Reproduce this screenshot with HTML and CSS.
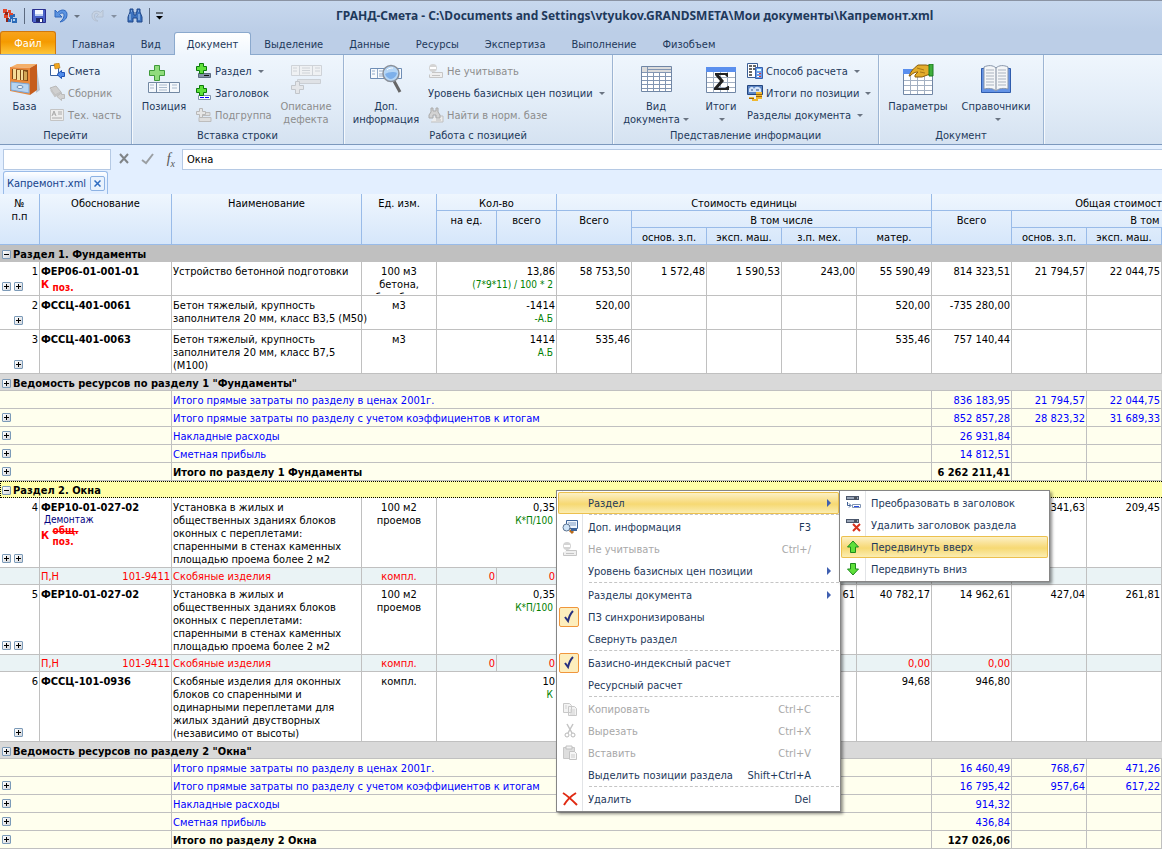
FILE: index.html
```html
<!DOCTYPE html>
<html lang="ru">

<head>
    <meta charset="UTF-8">
    <meta name="viewport" content="width=device-width, initial-scale=1.0">
    <title>ГРАНД-Смета</title>
    <link rel="stylesheet" href="styles.css">
</head>

<body>
    <!-- иконки, которые нужны несколько раз -->
    <svg class="defs" aria-hidden="true">
        <symbol id="plus" viewBox="0 0 16 16">
            <path d="M5.500 1.500h4v3h3v4h-3v3h-4v-3h-3v-4h3z" fill="#5fe03a" stroke="#0b7a0b" />
        </symbol>
        <symbol id="exclude" viewBox="0 0 16 16">
            <path d="M4 9.500h10.500v5H1.500v-3" fill="#efefef" stroke="#c6c6c6" />
            <path d="M4 12.500h8" stroke="#c4c4c4" />
            <circle cx="5" cy="5" r="4" fill="#d4d4d4" />
            <path d="M2 5h6" stroke="#fff" stroke-width="2" />
        </symbol>
        <symbol id="bar" viewBox="0 0 16 16">
            <rect x="1.500" y="2.500" width="12" height="3" fill="#9aa6b8" stroke="#4a566b" />
            <path d="M9 4h3" stroke="#000" />
        </symbol>
    </svg>

    <header class="title">
        <div class="quick">
            <svg width="16" height="16" viewBox="0 0 16 16">
                <path d="M1 1h4v4H1zM6 2h3v3H6zM2 6h4v4H2zM7 5h4v4H7z" fill="#e2472b" />
                <path d="M3 4h3v3H3zM4 10h3v4H4z" fill="#8f2418" />
                <path d="M8 7h3v4H8zM10 10h5v5h-5zM6 11h3v3H6zM11 6h2v3h-2z" fill="#2b6ab8" />
                <path d="M11 11h2v2h-2z" fill="#a9d0f5" />
            </svg>
            <i class="line"></i>
            <button aria-label="Сохранить"><svg width="16" height="16" viewBox="0 0 16 16">
                    <path d="M1.500 1.500h13v13h-12l-1-1z" fill="#4a62c8" stroke="#2a2f8f" />
                    <path d="M4 2h8v6H4z" fill="#f5f8ff" />
                    <path d="M4 6h8v2H4z" fill="#bcd0f2" />
                    <path d="M5 10h7v4H5z" fill="#222a66" />
                    <path d="M9 11h2v3H9z" fill="#fff" />
                </svg></button>
            <button class="undo" aria-label="Отменить"><svg width="16" height="16" viewBox="0 0 16 16">
                    <path d="M2 2v7h7L6.500 6.500C9 4 11 5 11 7.500c0 2-1 4-4 6.500 5-1 7-4 7-7.500 0-5-5.500-6-9.500-2z" fill="#5b93e0" stroke="#2e66bd" />
                </svg><b class="arr"></b></button>
            <button class="undo" aria-label="Вернуть" disabled><svg width="16" height="16" viewBox="0 0 16 16">
                    <path d="M13 2v7H6l2.500-2.500C6 4.500 4.500 5.500 4.500 8s1 4 3.500 5c-4 0-6-2-6-5.500C2 3 7 2 10.500 4.500z" fill="#c9d3e0" stroke="#adb9c9" />
                </svg><b class="arr"></b></button>
            <button aria-label="Найти"><svg width="16" height="16" viewBox="0 0 16 16">
                    <path d="M3 1h3v3h1v3h2V4h1V1h3v3l2 5v5h-5v-4H6v4H1V9l2-5z" fill="#3d73bf" stroke="#20488a" />
                    <path d="M3 6v6M12 6v6M4 3h1M11 3h1" stroke="#b4d3f5" />
                </svg></button>
            <i class="line"></i>
            <button class="more" aria-label="Настройка панели"><svg width="8" height="8" viewBox="0 0 8 8">
                    <path d="M0 1h7" stroke="#000" />
                    <path d="M0 4h7L3.500 7.500z" />
                </svg></button>
        </div>
        <h1>ГРАНД-Смета - C:\Documents and Settings\vtyukov.GRANDSMETA\Мои документы\Капремонт.xml</h1>
    </header>

    <nav class="tabs">
        <button class="file">Файл</button>
        <button>Главная</button>
        <button>Вид</button>
        <button class="on">Документ</button>
        <button>Выделение</button>
        <button>Данные</button>
        <button>Ресурсы</button>
        <button>Экспертиза</button>
        <button>Выполнение</button>
        <button>Физобъем</button>
    </nav>

    <div class="ribbon">
        <section class="g1">
            <div class="tools">
                <button class="big"><svg width="32" height="32" viewBox="0 0 32 32">
                        <path d="M28 5l3 21-4 3z" fill="#b9c2cc" />
                        <path d="M2 3l6-3h20l-7 4z" fill="#f4b06a" />
                        <path d="M21 4l7-4v26l-7 5z" fill="#c65d1c" />
                        <path d="M1 3l20 1v27L1 27z" fill="#ea8a3c" />
                        <path d="M3 5l16 1v11L3 15z" fill="#7d4a15" />
                        <path d="M4 5h3v10H4zM8 6h3v10H8zM12 6h2v10h-2z" fill="#f4dc98" />
                        <path d="M15 7l3 1v8h-3z" fill="#d2a856" />
                        <path d="M2 18l18 2v9L2 26z" fill="#b6d4f2" stroke="#7ba6d6" />
                        <ellipse cx="11" cy="23" rx="3" ry="1.500" fill="#fff" stroke="#6b8db5" />
                    </svg><span>База</span></button>
                <div class="col">
                    <button><svg width="16" height="16" viewBox="0 0 16 16">
                            <path d="M1.500 2.500h8v10h-8z" fill="#fff" stroke="#39619e" />
                            <path d="M5 1l5-1 1 5-5 1z" fill="#f0a61e" stroke="#a8680d" stroke-width=".5" />
                            <path d="M15.500 9.500h-3v-2l-4.500 4 4.500 4v-2h3z" fill="#4f8ceb" stroke="#1f52b5" />
                        </svg>Смета</button>
                    <button disabled><svg width="16" height="16" viewBox="0 0 16 16">
                            <path d="M1 3l6-2 5 6-6 3z" fill="#cfcfcf" stroke="#b9b9b9" />
                            <path d="M2 5l4 6 6-3" fill="none" stroke="#c4c4c4" stroke-width="2" />
                            <path d="M15.500 9.500h-3v-2l-4.500 4 4.500 4v-2h3z" fill="#d2d2d2" stroke="#bbb" />
                        </svg>Сборник</button>
                    <button disabled><svg width="16" height="16" viewBox="0 0 16 16">
                            <path d="M1.500 2.500h13v11h-13z" fill="#ededed" stroke="#c4c4c4" />
                            <path d="M3 9l2-5 2 5M4 7h2M9 5h4M9 7h4M3 11h10" fill="none" stroke="#aaa" />
                        </svg>Тех. часть</button>
                </div>
            </div>
            <h2>Перейти</h2>
        </section>

        <section class="g2">
            <div class="tools">
                <button class="big"><svg width="32" height="32" viewBox="0 0 32 32">
                        <path d="M6.500 1.500h5v5h5v5h-5v5h-5v-5h-5v-5h5z" fill="#90dc7c" stroke="#3f9a3a" />
                        <path d="M.500 18.500h31v10H.500z" fill="#f4f8fc" stroke="#7288a3" />
                        <path d="M8.500 18v10M21.500 18v10" stroke="#7288a3" />
                        <path d="M2 21h4M2 24h4M11 21h8M11 23.500h8M11 26h8M24 21h5M24 24h5" stroke="#a9b9cc" />
                    </svg><span>Позиция</span></button>
                <div class="col">
                    <button><svg width="16" height="16" viewBox="0 0 16 16">
                            <path d="M2.500 10.500h12v4h-12z" fill="#8593a8" stroke="#5d6b80" />
                            <path d="M8 12.500h5" stroke="#111" />
                            <use href="#plus" x="-2" y="-1" width="16" height="16" />
                        </svg>Раздел<b class="arr"></b></button>
                    <button><svg width="16" height="16" viewBox="0 0 16 16">
                            <path d="M2.500 10.500h12v4h-12z" fill="#fff" stroke="#8092ab" />
                            <path d="M4 12.500h9" stroke="#00f" stroke-dasharray="4 1" />
                            <use href="#plus" x="-2" y="-1" width="16" height="16" />
                        </svg>Заголовок</button>
                    <button disabled><svg width="16" height="16" viewBox="0 0 16 16">
                            <path d="M4 5.500h10v3H4zM3 10.500h12v4H3z" fill="#dedede" stroke="#bdbdbd" />
                            <path d="M3.500 1.500h3v3h3v3h-3v3h-3v-3h-3v-3h3z" fill="#e6e6e6" stroke="#b8b8b8" />
                        </svg>Подгруппа</button>
                </div>
                <button class="big" disabled><svg width="32" height="32" viewBox="0 0 32 32">
                        <path d="M1.500 1.500h30v10h-30z" fill="#eff1f3" stroke="#cfd3d8" />
                        <path d="M9.500 2v9M22.500 2v9M3 4h4M3 7h4M12 4h8M12 6.500h8M12 9h8M25 4h5M25 7h5" stroke="#cfd3d8" />
                        <path d="M7.500 15.500h23v4h-23z" fill="#dfe2e6" stroke="#cbcfd4" />
                        <path d="M5.500 17.500h4v4h4v4h-4v4h-4v-4h-4v-4h4z" fill="#e4e6e9" stroke="#c2c6cb" />
                    </svg><span>Описание<br>дефекта</span></button>
            </div>
            <h2>Вставка строки</h2>
        </section>

        <section class="g3">
            <div class="tools">
                <button class="big"><svg width="32" height="32" viewBox="0 0 32 32">
                        <path d="M.500 4.500h31v10H.500z" fill="#f7fafd" stroke="#6e8db5" />
                        <path d="M7.500 5v9M2 7h3M2 10h3M9 7h5M9 10h4M9 12h4" stroke="#92abca" />
                        <path d="M24 17l6 11" stroke="#666" stroke-width="3" />
                        <circle cx="21" cy="9.500" r="8" fill="#b5d6f6" stroke="#8a9099" stroke-width="1.500" />
                        <path d="M15 10c3-2 9-3 12-1-1 4-4 6-7 6-2-1-4-2-5-5z" fill="#7db0ea" />
                        <path d="M17 6c2-2 4-2 6-2" stroke="#fff" fill="none" />
                    </svg><span>Доп.<br>информация</span></button>
                <div class="col">
                    <button disabled><svg width="16" height="16">
                            <use href="#exclude" />
                        </svg>Не учитывать</button>
                    <button>Уровень базисных цен позиции<b class="arr"></b></button>
                    <button disabled><svg width="16" height="16" viewBox="0 0 16 16">
                            <path d="M7 9h8v6H3" fill="#ececec" stroke="#c0c0c0" />
                            <path d="M3 1h2v3h3V1h2v4l2 3v3H8V8H5v3H1V8l2-3z" fill="#d2d2d2" stroke="#aaa" />
                            <path d="M8 13h5" stroke="#bbb" />
                        </svg>Найти в норм. базе</button>
                </div>
            </div>
            <h2>Работа с позицией</h2>
        </section>

        <section class="g4">
            <div class="tools">
                <button class="big"><svg width="32" height="32" viewBox="0 0 32 32">
                        <path d="M1.500 2.500h30v25h-30z" fill="#fff" stroke="#7086a5" />
                        <path d="M2 3h29v5H2z" fill="#dcdcdc" />
                        <path d="M2 8.500h29M2 12.500h29M2 16.500h29M2 20.500h29M2 24.500h29M7.500 3v24M13.500 8v19M19.500 8v19M25.500 8v19M8 5.500h23" stroke="#8296b3" />
                    </svg><span>Вид<br>документа<b class="arr"></b></span></button>
                <button class="big"><svg width="32" height="32" viewBox="0 0 32 32">
                        <path d="M1.500 3.500h29v25h-29z" fill="#fff" stroke="#7086a5" />
                        <path d="M1 3h30v5H1z" fill="#5a8fee" />
                        <path d="M2 13.500h28M2 18.500h28M2 23.500h28M8.500 8v20M15.500 8v20M22.500 8v20" stroke="#a3b0c2" />
                        <path d="M10 9h13v4h-1l-2-2h-6l5 6-6 7h7l3-2h1v4H9v-2l6-7-5-6z" fill="#222" />
                    </svg><span>Итоги<br><b class="arr"></b></span></button>
                <div class="col">
                    <button><svg width="16" height="16" viewBox="0 0 16 16">
                            <path d="M.500.500h10v14H.500z" fill="#fff" stroke="#3b5f96" />
                            <path d="M2 3h3M2 6h3M2 9h3M2 12h3M6 3h3M6 6h2" stroke="#333" stroke-width="1.500" />
                            <path d="M8.500 4.500h7v11h-7z" fill="#6d9ce6" stroke="#3461ae" />
                            <path d="M10 6h4v2h-4z" fill="#dff" />
                            <path d="M10 10h2v1h-2zM10 13h2v1h-2z" fill="#fff" />
                            <path d="M12 10h2v1h-2zM12 13h2v1h-2z" fill="#d33" />
                        </svg>Способ расчета<b class="arr"></b></button>
                    <button><svg width="16" height="16" viewBox="0 0 16 16">
                            <path d="M.500.500h15v9H.500z" fill="#5b84c4" stroke="#23457f" />
                            <path d="M2 4c2-3 4-3 5 0 1-3 5-3 7 0v3H2z" fill="#d5e4f8" />
                            <path d="M4 5h2M9 5h3" stroke="#284a86" />
                            <path d="M9 7h6v7H9zM2 12h5v2H2zM5 14h6v2H5z" fill="#f0b830" />
                            <path d="M9 9.500h6M9 11.500h6M2 13.500h5" stroke="#9a640c" />
                        </svg>Итоги по позиции<b class="arr"></b></button>
                    <button>Разделы документа<b class="arr"></b></button>
                </div>
            </div>
            <h2>Представление информации</h2>
        </section>

        <section class="g5">
            <div class="tools">
                <button class="big"><svg width="32" height="32" viewBox="0 0 32 32">
                        <path d="M1.500 5.500h29v25h-29z" fill="#fff" stroke="#7086a5" />
                        <path d="M1 5h9v5H1z" fill="#5a8fee" />
                        <path d="M2 16.500h28M2 21.500h28M2 26.500h28M8.500 10v20M15.500 10v20M22.500 10v20" stroke="#a3b0c2" />
                        <path d="M7 12c2-5 5-8 9-11h8l4 1v8l-8 3h-7v-2l3-3c-3 0-5 1-8 4z" fill="#e3ad2c" stroke="#8b5e0c" />
                        <path d="M15 4l7 2M18 8l5 1" stroke="#a87817" />
                        <path d="M27 0h4v12h-4z" fill="#3fae3b" stroke="#1c7a25" />
                    </svg><span>Параметры</span></button>
                <button class="big"><svg width="32" height="32" viewBox="0 0 32 32">
                        <path d="M1.500 4.500h29v24h-29z" fill="#6493e6" stroke="#2f5cad" />
                        <path d="M4 3c4-2 9-2 12 1 3-3 8-3 12-1v22c-4-1-9-1-12 2-3-3-8-3-12-2z" fill="#f4f6f8" stroke="#8795aa" />
                        <path d="M16 4v22" stroke="#7a879b" />
                        <path d="M6 6h8M6 9h8M6 12h8M6 15h8M6 18h8M6 21h8M18 6h8M18 9h8M18 12h8M18 15h8M18 18h8M18 21h8" stroke="#aab3bf" />
                    </svg><span>Справочники<br><b class="arr"></b></span></button>
            </div>
            <h2>Документ</h2>
        </section>
    </div>

    <div class="formula">
        <input class="cell" type="text" aria-label="Имя ячейки">
        <div class="fbtns">
            <button aria-label="Отмена"><svg width="12" height="12" viewBox="0 0 12 12">
                    <path d="M2 1l8 9M10 1l-8 9" stroke="#808487" stroke-width="2" />
                </svg></button>
            <button aria-label="Ввод"><svg width="14" height="12" viewBox="0 0 14 12">
                    <path d="M1 7l4 3 7-9" fill="none" stroke="#9b9fa3" stroke-width="2" />
                </svg></button>
            <button class="fx" aria-label="Функция"><i>f</i><sub>x</sub></button>
        </div>
        <input class="text" type="text" value="Окна" aria-label="Формула">
    </div>

    <div class="docs">
        <div class="doc"><a href="#sheet">Капремонт.xml</a><button aria-label="Закрыть"><svg width="7" height="7" viewBox="0 0 7 7">
                    <path d="M.500.500l6 6M6.500.500l-6 6" stroke="#2f6cc0" stroke-width="1.500" />
                </svg></button></div>
    </div>

    <main class="sheet" id="sheet">
        <table>
            <colgroup>
                <col class="c40"><col class="c132"><col class="c190"><col class="c75"><col class="c60"><col class="c60">
                <col class="c75"><col class="c75"><col class="c75"><col class="c75"><col class="c75">
                <col class="c80"><col class="c75"><col class="c75"><col class="c75"><col class="c75">
            </colgroup>
            <thead>
                <tr>
                    <th rowspan="3">№<br>п.п</th>
                    <th rowspan="3">Обоснование</th>
                    <th rowspan="3">Наименование</th>
                    <th rowspan="3">Ед. изм.</th>
                    <th colspan="2">Кол-во</th>
                    <th colspan="5">Стоимость единицы</th>
                    <th colspan="5">Общая стоимость</th>
                </tr>
                <tr>
                    <th rowspan="2">на ед.</th>
                    <th rowspan="2">всего</th>
                    <th rowspan="2">Всего</th>
                    <th colspan="4">В том числе</th>
                    <th rowspan="2">Всего</th>
                    <th colspan="4">В том числе</th>
                </tr>
                <tr>
                    <th>основ. з.п.</th>
                    <th>эксп. маш.</th>
                    <th>з.п. мех.</th>
                    <th>матер.</th>
                    <th>основ. з.п.</th>
                    <th>эксп. маш.</th>
                    <th>з.п. мех.</th>
                    <th>матер.</th>
                </tr>
            </thead>
            <tbody>
                <tr class="sec">
                    <td colspan="16"><button class="exp minus" aria-label="Свернуть"></button>Раздел 1. Фундаменты</td>
                </tr>
                <tr class="item">
                    <td class="no"><div><span>1</span><p><button class="exp" aria-label="Развернуть"></button><button class="exp" aria-label="Развернуть"></button></p></div></td>
                    <td class="code">ФЕР06-01-001-01<div class="k">К <em>поз.</em></div></td>
                    <td class="name">Устройство бетонной подготовки</td>
                    <td class="unit"><div class="clip">100 м3 бетона, бутобетона</div></td>
                    <td colspan="2">13,86<small>(7*9*11) / 100 * 2</small></td>
                    <td>58 753,50</td>
                    <td>1 572,48</td>
                    <td>1 590,53</td>
                    <td>243,00</td>
                    <td>55 590,49</td>
                    <td>814 323,51</td>
                    <td>21 794,57</td>
                    <td>22 044,75</td>
                    <td></td>
                    <td></td>
                </tr>
                <tr class="item">
                    <td class="no"><div><span>2</span><p><button class="exp" aria-label="Развернуть"></button></p></div></td>
                    <td class="code">ФССЦ-401-0061</td>
                    <td class="name">Бетон тяжелый, крупность<br>заполнителя 20 мм, класс В3,5 (М50)</td>
                    <td class="unit">м3</td>
                    <td colspan="2">-1414<small>-А.Б</small></td>
                    <td>520,00</td>
                    <td></td>
                    <td></td>
                    <td></td>
                    <td>520,00</td>
                    <td>-735 280,00</td>
                    <td></td>
                    <td></td>
                    <td></td>
                    <td></td>
                </tr>
                <tr class="item">
                    <td class="no"><div><span>3</span><p><button class="exp" aria-label="Развернуть"></button></p></div></td>
                    <td class="code">ФССЦ-401-0063</td>
                    <td class="name">Бетон тяжелый, крупность<br>заполнителя 20 мм, класс В7,5<br>(М100)</td>
                    <td class="unit">м3</td>
                    <td colspan="2">1414<small>А.Б</small></td>
                    <td>535,46</td>
                    <td></td>
                    <td></td>
                    <td></td>
                    <td>535,46</td>
                    <td>757 140,44</td>
                    <td></td>
                    <td></td>
                    <td></td>
                    <td></td>
                </tr>
                <tr class="res">
                    <td colspan="16"><button class="exp" aria-label="Развернуть"></button>Ведомость ресурсов по разделу 1 "Фундаменты"</td>
                </tr>
                <tr class="sum">
                    <td colspan="2"></td>
                    <td colspan="9">Итого прямые затраты по разделу в ценах 2001г.</td>
                    <td>836 183,95</td>
                    <td>21 794,57</td>
                    <td>22 044,75</td>
                    <td></td>
                    <td></td>
                </tr>
                <tr class="sum">
                    <td colspan="2"><button class="exp" aria-label="Развернуть"></button></td>
                    <td colspan="9">Итого прямые затраты по разделу с учетом коэффициентов к итогам</td>
                    <td>852 857,28</td>
                    <td>28 823,32</td>
                    <td>31 689,33</td>
                    <td></td>
                    <td></td>
                </tr>
                <tr class="sum">
                    <td colspan="2"><button class="exp" aria-label="Развернуть"></button></td>
                    <td colspan="9">Накладные расходы</td>
                    <td>26 931,84</td>
                    <td></td>
                    <td></td>
                    <td></td>
                    <td></td>
                </tr>
                <tr class="sum">
                    <td colspan="2"><button class="exp" aria-label="Развернуть"></button></td>
                    <td colspan="9">Сметная прибыль</td>
                    <td>14 812,51</td>
                    <td></td>
                    <td></td>
                    <td></td>
                    <td></td>
                </tr>
                <tr class="sum all">
                    <td colspan="2"><button class="exp" aria-label="Развернуть"></button></td>
                    <td colspan="9">Итого по разделу 1 Фундаменты</td>
                    <td>6 262 211,41</td>
                    <td></td>
                    <td></td>
                    <td></td>
                    <td></td>
                </tr>
                <tr class="sec cur">
                    <td colspan="16"><div><button class="exp minus" aria-label="Свернуть"></button>Раздел 2. Окна</div></td>
                </tr>
                <tr class="item">
                    <td class="no"><div><span>4</span><p><button class="exp" aria-label="Развернуть"></button><button class="exp" aria-label="Развернуть"></button></p></div></td>
                    <td class="code">ФЕР10-01-027-02<div class="dem">Демонтаж</div><div class="k two">К <em><s>общ.</s><br>поз.</em></div></td>
                    <td class="name">Установка в жилых и<br>общественных зданиях блоков<br>оконных с переплетами:<br>спаренными в стенах каменных<br>площадью проема более 2 м2</td>
                    <td class="unit">100 м2<br>проемов</td>
                    <td colspan="2">0,35<small>К*П/100</small></td>
                    <td></td>
                    <td></td>
                    <td></td>
                    <td></td>
                    <td></td>
                    <td></td>
                    <td>341,63</td>
                    <td>209,45</td>
                    <td></td>
                    <td></td>
                </tr>
                <tr class="red">
                    <td></td>
                    <td><div class="pn"><span>П,Н</span><span>101-9411</span></div></td>
                    <td class="name">Скобяные изделия</td>
                    <td class="unit">компл.</td>
                    <td>0</td>
                    <td>0</td>
                    <td></td>
                    <td></td>
                    <td></td>
                    <td></td>
                    <td>0,00</td>
                    <td>0,00</td>
                    <td></td>
                    <td></td>
                    <td></td>
                    <td></td>
                </tr>
                <tr class="item">
                    <td class="no"><div><span>5</span><p><button class="exp" aria-label="Развернуть"></button><button class="exp" aria-label="Развернуть"></button></p></div></td>
                    <td class="code">ФЕР10-01-027-02</td>
                    <td class="name">Установка в жилых и<br>общественных зданиях блоков<br>оконных с переплетами:<br>спаренными в стенах каменных<br>площадью проема более 2 м2</td>
                    <td class="unit">100 м2<br>проемов</td>
                    <td colspan="2">0,35<small>К*П/100</small></td>
                    <td></td>
                    <td></td>
                    <td></td>
                    <td>61</td>
                    <td>40 782,17</td>
                    <td>14 962,61</td>
                    <td>427,04</td>
                    <td>261,81</td>
                    <td></td>
                    <td></td>
                </tr>
                <tr class="red">
                    <td></td>
                    <td><div class="pn"><span>П,Н</span><span>101-9411</span></div></td>
                    <td class="name">Скобяные изделия</td>
                    <td class="unit">компл.</td>
                    <td>0</td>
                    <td>0</td>
                    <td></td>
                    <td></td>
                    <td></td>
                    <td></td>
                    <td>0,00</td>
                    <td>0,00</td>
                    <td></td>
                    <td></td>
                    <td></td>
                    <td></td>
                </tr>
                <tr class="item">
                    <td class="no"><div><span>6</span><p><button class="exp" aria-label="Развернуть"></button></p></div></td>
                    <td class="code">ФССЦ-101-0936</td>
                    <td class="name">Скобяные изделия для оконных<br>блоков со спаренными и<br>одинарными переплетами для<br>жилых зданий двустворных<br>(независимо от высоты)</td>
                    <td class="unit">компл.</td>
                    <td colspan="2">10<small>К</small></td>
                    <td></td>
                    <td></td>
                    <td></td>
                    <td></td>
                    <td>94,68</td>
                    <td>946,80</td>
                    <td></td>
                    <td></td>
                    <td></td>
                    <td></td>
                </tr>
                <tr class="res">
                    <td colspan="16"><button class="exp" aria-label="Развернуть"></button>Ведомость ресурсов по разделу 2 "Окна"</td>
                </tr>
                <tr class="sum">
                    <td colspan="2"></td>
                    <td colspan="9">Итого прямые затраты по разделу в ценах 2001г.</td>
                    <td>16 460,49</td>
                    <td>768,67</td>
                    <td>471,26</td>
                    <td></td>
                    <td></td>
                </tr>
                <tr class="sum">
                    <td colspan="2"><button class="exp" aria-label="Развернуть"></button></td>
                    <td colspan="9">Итого прямые затраты по разделу с учетом коэффициентов к итогам</td>
                    <td>16 795,42</td>
                    <td>957,64</td>
                    <td>617,22</td>
                    <td></td>
                    <td></td>
                </tr>
                <tr class="sum">
                    <td colspan="2"><button class="exp" aria-label="Развернуть"></button></td>
                    <td colspan="9">Накладные расходы</td>
                    <td>914,32</td>
                    <td></td>
                    <td></td>
                    <td></td>
                    <td></td>
                </tr>
                <tr class="sum">
                    <td colspan="2"><button class="exp" aria-label="Развернуть"></button></td>
                    <td colspan="9">Сметная прибыль</td>
                    <td>436,84</td>
                    <td></td>
                    <td></td>
                    <td></td>
                    <td></td>
                </tr>
                <tr class="sum all">
                    <td colspan="2"><button class="exp" aria-label="Развернуть"></button></td>
                    <td colspan="9">Итого по разделу 2 Окна</td>
                    <td>127 026,06</td>
                    <td></td>
                    <td></td>
                    <td></td>
                    <td></td>
                </tr>
            </tbody>
        </table>
    </main>

    <!-- контекстное меню -->
    <ul class="menu main">
        <li><button class="hot"><i></i><span>Раздел</span><b class="sub"></b></button></li>
        <li class="sep"></li>
        <li><button><i><svg width="16" height="16" viewBox="0 0 16 16">
                        <path d="M4.500 1.500h11v8h-11z" fill="#f0f6fd" stroke="#3c6399" />
                        <path d="M6 4h8M8 6h6" stroke="#7f9bc2" />
                        <path d="M8 11l3 3" stroke="#b86b1c" stroke-width="3" />
                        <circle cx="4.500" cy="8.500" r="3.500" fill="#cfe4f8" stroke="#5d7390" />
                        <path d="M9 10h6v2H9z" fill="#3c6399" />
                    </svg></i><span>Доп. информация</span><kbd>F3</kbd></button></li>
        <li><button disabled><i><svg width="16" height="16">
                        <use href="#exclude" />
                    </svg></i><span>Не учитывать</span><kbd>Ctrl+/</kbd></button></li>
        <li><button><i></i><span>Уровень базисных цен позиции</span><b class="sub"></b></button></li>
        <li class="sep"></li>
        <li><button><i></i><span>Разделы документа</span><b class="sub"></b></button></li>
        <li><button><i class="check"><svg width="16" height="16" viewBox="0 0 16 16">
                        <path d="M4 8l3 4c1-4 2-7 5-10" fill="none" stroke="#26307f" stroke-width="2" />
                    </svg></i><span>ПЗ синхронизированы</span></button></li>
        <li><button><i></i><span>Свернуть раздел</span></button></li>
        <li class="sep"></li>
        <li><button><i class="check"><svg width="16" height="16" viewBox="0 0 16 16">
                        <path d="M4 8l3 4c1-4 2-7 5-10" fill="none" stroke="#26307f" stroke-width="2" />
                    </svg></i><span>Базисно-индексный расчет</span></button></li>
        <li><button><i></i><span>Ресурсный расчет</span></button></li>
        <li class="sep"></li>
        <li><button disabled><i><svg width="16" height="16" viewBox="0 0 16 16">
                        <path d="M1.500 2.500h6l2 2v7h-8zM6.500 5.500h6l2 2v7h-8z" fill="#f3f3f3" stroke="#c8c8c8" />
                        <path d="M8 9h5M8 11h5M8 13h5M3 5h2M3 7h2" stroke="#d2d2d2" />
                    </svg></i><span>Копировать</span><kbd>Ctrl+C</kbd></button></li>
        <li><button disabled><i><svg width="16" height="16" viewBox="0 0 16 16">
                        <path d="M5 1l5 9M11 1L6 10" stroke="#c4c4c4" stroke-width="1.500" />
                        <circle cx="5" cy="12" r="2" fill="none" stroke="#b8b8b8" />
                        <circle cx="11" cy="12" r="2" fill="none" stroke="#b8b8b8" />
                    </svg></i><span>Вырезать</span><kbd>Ctrl+X</kbd></button></li>
        <li><button disabled><i><svg width="16" height="16" viewBox="0 0 16 16">
                        <path d="M1.500 2.500h11v11h-11z" fill="#dedede" stroke="#c8c8c8" />
                        <path d="M4 1h6v3H4z" fill="#f2f2f2" stroke="#c0c0c0" />
                        <path d="M7.500 6.500h5l2 2v6h-7z" fill="#f6f6f6" stroke="#c4c4c4" />
                        <path d="M9 10h4M9 12h4" stroke="#ccc" />
                    </svg></i><span>Вставить</span><kbd>Ctrl+V</kbd></button></li>
        <li><button><i></i><span>Выделить позиции раздела</span><kbd>Shift+Ctrl+A</kbd></button></li>
        <li class="sep"></li>
        <li><button><i><svg width="16" height="16" viewBox="0 0 16 16">
                        <path d="M1 2c5 3 9 7 14 12M14 2C9 5 5 9 2 14" fill="none" stroke="#e02a12" stroke-width="2" />
                    </svg></i><span>Удалить</span><kbd>Del</kbd></button></li>
    </ul>

    <ul class="menu second">
        <li><button><i><svg width="16" height="16" viewBox="0 0 16 16">
                        <use href="#bar" y="-1" width="16" height="16" />
                        <path d="M2.500 7v3.500h3M4 8.500l2 2-2 2" fill="none" stroke="#3e5f93" />
                        <path d="M7.500 9.500h8v3h-8z" fill="#fff" stroke="#7f93b2" />
                        <path d="M9 11.500h5" stroke="#2a4be0" />
                    </svg></i><span>Преобразовать в заголовок</span></button></li>
        <li><button><i><svg width="16" height="16" viewBox="0 0 16 16">
                        <use href="#bar" width="16" height="16" />
                        <path d="M8 7l7 7M15 7l-7 7" stroke="#d8301b" stroke-width="2" />
                    </svg></i><span>Удалить заголовок раздела</span></button></li>
        <li><button class="hot"><i><svg width="16" height="16" viewBox="0 0 16 16">
                        <path d="M8 2l5.500 6H10.500v5.500h-5V8H2.500z" fill="#5fe03a" stroke="#1d8a1d" />
                    </svg></i><span>Передвинуть вверх</span></button></li>
        <li><button><i><svg width="16" height="16" viewBox="0 0 16 16">
                        <path d="M8 14l5.500-6H10.500V2.500h-5V8H2.500z" fill="#5fe03a" stroke="#1d8a1d" />
                    </svg></i><span>Передвинуть вниз</span></button></li>
    </ul>
</body>

</html>
```
FILE: styles.css
```css
* {
    margin: 0;
    padding: 0;
    box-sizing: border-box;
}

body {
    position: relative;
    overflow-x: hidden;
    background: #fff;
    color: #000;
    font: 11px/13px Tahoma, "DejaVu Sans Condensed", "DejaVu Sans", sans-serif;
}

button,
input {
    border: 0;
    outline: none;
    background: none;
    font: inherit;
    color: inherit;
}

button {
    cursor: pointer;
    white-space: nowrap;
}

svg {
    display: block;
    flex: none;
}

i,
em {
    font-style: normal;
}

ul {
    list-style: none;
}

.defs {
    position: absolute;
    width: 0;
    height: 0;
}

.arr {
    display: inline-block;
    flex: none;
    border: 3px solid transparent;
    border-top-color: #6a7482;
    border-bottom: 0;
}

/* заголовок окна */
.title {
    display: flex;
    align-items: center;
    height: 31px;
    border-top: 1px solid #8a93a3;
    background: linear-gradient(#c7d8ee, #bccee7);
    color: #1e395b;
}

.quick {
    display: flex;
    align-items: center;
    gap: 6px;
    width: 336px;
    padding-left: 2px;
}

.line {
    width: 1px;
    height: 16px;
    background: #5c6a80;
}

.undo {
    display: flex;
    align-items: center;
    gap: 5px;
    padding-right: 4px;
}

.undo:disabled {
    opacity: .7;
}

.title h1 {
    font: bold 12px/16px "Noto Sans", sans-serif;
    white-space: nowrap;
}

/* вкладки ленты */
.tabs {
    display: flex;
    align-items: stretch;
    height: 24px;
    background: #bccee7;
    color: #1e395b;
    border-bottom: 1px solid #8ba9cd;
}

.tabs button {
    padding: 4px 13px 0;
}

.tabs .file {
    width: 56px;
    margin-right: 3px;
    padding: 0;
    border: 1px solid #d0780c;
    border-bottom: 0;
    border-radius: 3px 3px 0 0;
    background: linear-gradient(#f7a31d, #f59a00 45%, #fdc53a);
    color: #fff;
}

.tabs .on {
    margin: 1px 0 -1px;
    border: 1px solid #8ba9cd;
    border-bottom: 0;
    border-radius: 3px 3px 0 0;
    padding: 0 12px;
    background: linear-gradient(#fff, #eff6fd);
}

/* лента */
.ribbon {
    display: flex;
    height: 90px;
    border-bottom: 1px solid #7c98bd;
    background: linear-gradient(#eff6fd, #e3edf8 50%, #d5e2f1);
    color: #1e395b;
}

.ribbon section {
    display: flex;
    flex-direction: column;
    border-right: 1px solid #9db5d3;
    box-shadow: 1px 0 #f5f9fd;
}

.ribbon .g1 { width: 132px; }
.ribbon .g2 { width: 212px; }
.ribbon .g3 { width: 269px; }
.ribbon .g4 { width: 266px; }
.ribbon .g5 { width: 165px; }

.ribbon h2 {
    font-size: 11px;
    font-weight: normal;
    text-align: center;
}

.tools {
    display: flex;
    flex: none;
    height: 74px;
    padding-top: 5px;
}

.tools button {
    display: flex;
    align-items: center;
    gap: 3px;
    height: 22px;
}

.tools .arr {
    margin-left: 3px;
}

.tools .big {
    flex: none;
    flex-direction: column;
    gap: 4px;
    height: auto;
    justify-content: flex-start;
    padding-top: 4px;
}

.big .arr {
    margin-bottom: 2px;
}

.tools button:disabled {
    color: #8d8d8d;
}

.g1 .big { width: 49px; }
.g2 .big { width: 64px; }
.g2 .col { width: 78px; }
.g3 .big { width: 84px; }
.g4 .big { width: 86px; }
.g4 .big + .big { width: 44px; }
.g4 .col { padding-left: 4px; }
.g5 .big { width: 78px; }

/* строка формул */
.formula {
    display: flex;
    align-items: center;
    height: 26px;
    padding: 4px 0 1px 3px;
    background: #e3efff;
}

.formula input {
    height: 21px;
    border: 1px solid #b5c9e4;
    background: #fff;
    padding: 0 4px;
}

.formula .cell {
    width: 108px;
}

.formula .text {
    flex: 1;
    min-width: 0;
    border-right: 0;
}

.fbtns {
    display: flex;
    align-items: center;
    justify-content: space-between;
    width: 71px;
    padding: 0 7px;
}

.fx {
    font: italic 14px/16px "Liberation Serif", serif;
    color: #555;
}

.fx i {
    font-style: italic;
}

.fx sub {
    font-size: 10px;
    line-height: 8px;
}

.docs {
    display: flex;
    height: 23px;
    padding-left: 3px;
    background: #e3efff;
}

.doc {
    display: flex;
    align-items: center;
    gap: 4px;
    padding: 1px 2px 0 3px;
    border: 1px solid #99bbe8;
    border-bottom: 0;
    border-radius: 3px 3px 0 0;
    background: linear-gradient(#fff, #e3efff 40%);
}

.doc a {
    color: #15428b;
    text-decoration: none;
}

.doc button {
    display: flex;
    align-items: center;
    justify-content: center;
    width: 15px;
    height: 15px;
    border: 1px solid #8db2e3;
    border-radius: 2px;
    background: #e9f2fd;
}

/* таблица сметы */
.sheet {
    overflow: hidden;
}

table {
    width: 1312px;
    table-layout: fixed;
    border-collapse: separate;
    border-spacing: 0;
}

.c40 { width: 40px; }
.c60 { width: 60px; }
.c75 { width: 75px; }
.c80 { width: 80px; }
.c132 { width: 132px; }
.c190 { width: 190px; }

thead {
    background: linear-gradient(#eff6fe, #d5e6fa);
}

th {
    height: 17px;
    padding: 3px 0 0;
    border-right: 1px solid #99bbe8;
    border-bottom: 1px solid #99bbe8;
    font-weight: normal;
    vertical-align: top;
}

td {
    padding: 3px 1px 0;
    border-right: 1px solid #c0c0c0;
    border-bottom: 1px solid #c0c0c0;
    text-align: right;
    vertical-align: top;
    white-space: nowrap;
}

.exp {
    width: 9px;
    height: 9px;
    border: 1px solid #7b9ab8;
    border-radius: 1px;
    background:
        linear-gradient(#000, #000) center / 5px 1px no-repeat,
        linear-gradient(#000, #000) center / 1px 5px no-repeat,
        linear-gradient(135deg, #fff, #d3d6dc);
    vertical-align: middle;
}

.exp.minus {
    background:
        linear-gradient(#000, #000) center / 5px 1px no-repeat,
        linear-gradient(135deg, #fff, #d3d6dc);
}

.sec td,
.res td {
    height: 17px;
    padding: 3px 2px 0;
    text-align: left;
    font-weight: bold;
}

.sec .exp,
.res .exp {
    margin: -2px 2px 0 0;
}

.sec td {
    border: 0;
    background: #c0c0c0;
}

.res td {
    background: #d9d9d9;
}

.cur td {
    height: 17px;
    padding: 0;
    background: #ffffa8;
}

.cur div {
    height: 17px;
    padding: 2px 1px 0;
    border: 1px dotted #000;
}

.item td {
    height: 34px;
    padding-bottom: 1px;
}

.item .no > div {
    display: flex;
    flex-direction: column;
    justify-content: space-between;
    height: 100%;
}

.no p {
    display: flex;
    gap: 3px;
    padding-left: 1px;
    margin-bottom: 3px;
}

.item .no p .exp:only-child {
    margin-left: 12px;
}

.item .code {
    font-weight: bold;
    text-align: left;
}

td.name {
    text-align: left;
}

td.unit {
    text-align: center;
}

.clip {
    height: 29px;
    overflow: hidden;
    padding: 0 12px;
    white-space: normal;
}

small {
    display: block;
    padding-right: 2px;
    color: #008000;
    font-size: 10px;
}

.k {
    color: #f00;
}

.k em {
    display: inline-block;
    font-size: 10px;
    line-height: 11px;
    vertical-align: -3px;
}

.k.two em {
    vertical-align: middle;
}

.dem {
    padding-left: 3px;
    color: #000080;
    font-size: 10px;
    line-height: 11px;
    font-weight: normal;
}

.red td {
    height: 17px;
    padding-top: 2px;
    background: #eaf3f5;
    color: #f00;
}

.pn {
    display: flex;
    justify-content: space-between;
}

.sum td {
    height: 18px;
    padding-top: 3px;
    background: #ffffee;
    color: #00f;
}

.sum td:nth-child(-n+2) {
    text-align: left;
}

.sum .exp {
    display: block;
    margin: 1px 0 0 1px;
}

.sum.all td {
    color: #000;
    font-weight: bold;
}

/* меню лежит поверх таблицы */
.menu {
    position: absolute;
    padding: 1px;
    border: 1px solid #868686;
    background: linear-gradient(90deg, #fff 25px, #e2e4e7 25px, #e2e4e7 26px, #fff 26px);
    box-shadow: 2px 2px 3px rgba(0, 0, 0, .45);
    color: #1e395b;
}

.menu.main {
    left: 556px;
    top: 490px;
    width: 285px;
}

.menu.second {
    left: 839px;
    top: 490px;
    width: 211px;
}

.menu button {
    display: flex;
    align-items: center;
    width: 100%;
    height: 22px;
    text-align: left;
}

.menu span {
    flex: 1;
    padding-left: 6px;
}

.menu i {
    display: flex;
    align-items: center;
    justify-content: center;
    width: 24px;
    height: 20px;
}

.menu .check {
    width: 20px;
    margin: 0 3px 0 1px;
    border: 1px solid #f0963c;
    border-radius: 2px;
    background: #fdeebd;
}

.menu kbd {
    padding-right: 28px;
    font: inherit;
}

.menu button:disabled {
    color: #a8a8a8;
}

.menu .hot {
    border-radius: 2px;
    background: linear-gradient(#fdf3cd, #f8dc82 45%, #f6d973 55%, #fcefb8);
    box-shadow: inset 0 0 0 1px #ecc04e;
}

.menu .sub {
    margin-right: 8px;
    border: 4px solid transparent;
    border-left-color: #3f5fb0;
    border-right: 0;
}

.menu .sep {
    height: 2px;
    margin-left: 31px;
    border-top: 1px dashed #c5c5c5;
}
```
